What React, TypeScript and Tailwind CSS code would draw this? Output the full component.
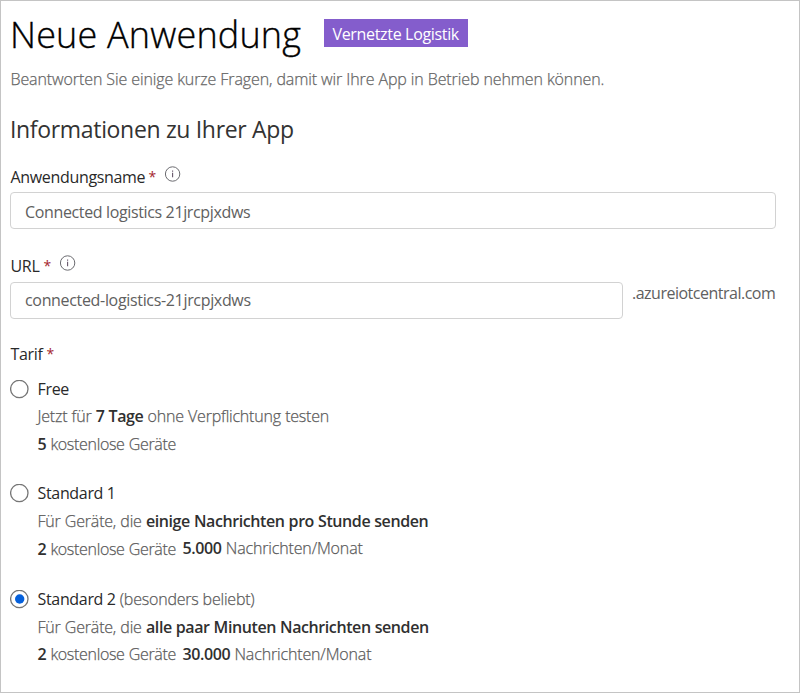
import type { ReactNode } from "react";

function Info() {
  return (
    <svg className="h-4 w-4 shrink-0" viewBox="0 0 16 16" fill="none">
      <circle cx="7.6" cy="8" r="7.2" stroke="#6b6b70" strokeWidth="1" />
      <path d="M7.6 6.7v4.6M7.6 4.6v1.1" stroke="#66566a" strokeWidth="1.1" />
    </svg>
  );
}

function Star() {
  return <span className="w-[7px] text-[14px] text-[#a4262c]">*</span>;
}

function Radio({ checked = false }: { checked?: boolean }) {
  return (
    <svg className="mr-[8.5px] h-[19px] w-[19px] shrink-0" viewBox="0 0 19 19">
      <circle cx="9.3" cy="9" r="8.7" fill="#fff" stroke="#767676" strokeWidth="1.3" />
      {checked && <circle cx="9.7" cy="9" r="4.7" fill="#0560db" />}
    </svg>
  );
}

function B({ children }: { children: ReactNode }) {
  return <b className="font-semibold tracking-[-0.41px] text-[#303030] [-webkit-text-stroke:0px]">{children}</b>;
}

function Detail({ children }: { children: ReactNode }) {
  return (
    <div className="flex pl-[27.5px] font-light leading-6 tracking-[-0.2px] text-[#5c5c5c] [word-spacing:0.3px] [-webkit-text-stroke:0.25px]">
      {children}
    </div>
  );
}

export default function App() {
  return (
    <main className="h-[693px] w-[800px] overflow-hidden whitespace-pre border border-[#c4c4c4] bg-white pl-[9px] font-['Open_Sans','Noto_Sans',sans-serif] text-[16px] tracking-[-0.33px] text-[#292929]">
      <header className="flex h-[66px] items-center">
        <h1 className="w-[314px] pt-[2px] text-[36px] font-light leading-[66px] tracking-[0.18px] text-black [-webkit-text-stroke:0.35px]">
          Neue Anwendung
        </h1>
        <span className="mb-[3px] h-[28px] w-[144px] bg-[#845dcc] pl-[8.5px] leading-[30px] tracking-[-0.33px] text-white">
          Vernetzte Logistik
        </span>
      </header>
      <p className="h-6 pl-[0.5px] font-light leading-6 tracking-[-0.1px] text-[#666] [-webkit-text-stroke:0.25px]">
        Beantworten Sie einige kurze Fragen, damit wir Ihre App in Betrieb nehmen können.
      </p>
      <h2 className="mt-[22px] h-8 text-[23px] leading-8 text-[#333]">
        Informationen zu Ihrer App
      </h2>

      <section className="mt-5">
        <div className="flex h-6 items-start leading-6">
          <label className="w-[138.5px] pl-[0.5px]">Anwendungsname</label>
          <Star />
          <span className="ml-[9px] pt-px"><Info /></span>
        </div>
        <div className="mt-[3px] h-[37px] w-[766px] rounded-sm border border-[#d2d2d2] pl-[14px] leading-[38px] tracking-[-0.36px] text-[#606060]">
          Connected logistics 21jrcpjxdws
        </div>
      </section>

      <section className="mt-[25px]">
        <div className="flex h-6 items-start leading-6">
          <label className="w-[33.5px] pl-[0.5px]">URL</label>
          <Star />
          <span className="ml-[9px] pt-px"><Info /></span>
        </div>
        <div className="mt-1 flex h-[37px]">
          <div className="h-[37px] w-[613px] rounded-sm border border-[#d2d2d2] pl-[14px] leading-[35px] text-[#606060]">
            connected-logistics-21jrcpjxdws
          </div>
          <span className="ml-[9px] leading-[23px] tracking-[-0.5px] text-[#606060]">.azureiotcentral.com</span>
        </div>
      </section>

      <section className="mt-[23px]">
        <div className="flex h-6 leading-6">
          <label className="w-[36.5px] pl-[0.5px]">Tarif</label>
          <Star />
        </div>

        <div className="mt-[11px]">
          <div className="flex h-6 items-center"><Radio /><span>Free</span></div>
          <div className="mt-[3px]"><Detail><span>Jetzt für <B>7 Tage</B> ohne Verpflichtung testen</span></Detail></div>
          <div className="mt-1"><Detail><span className="tracking-[-0.32px]"><B>5</B> kostenlose Geräte</span></Detail></div>
        </div>

        <div className="mt-[25px]">
          <div className="flex h-6 items-center"><Radio /><span>Standard 1</span></div>
          <div className="mt-1"><Detail><span>Für Geräte, die <B>einige Nachrichten pro Stunde senden</B></span></Detail></div>
          <div className="mt-1">
            <Detail>
              <span className="w-[145px] tracking-[-0.32px]"><B>2</B> kostenlose Geräte</span>
              <span className="-mt-px tracking-[-0.15px]"><B>5.000</B> Nachrichten/Monat</span>
            </Detail>
          </div>
        </div>

        <div className="mt-[26px]">
          <div className="flex h-6 items-center"><Radio checked /><span>Standard 2</span><span className="font-light tracking-[-0.2px] text-[#5c5c5c] [-webkit-text-stroke:0.25px]"> (besonders beliebt)</span></div>
          <div className="mt-1"><Detail><span>Für Geräte, die <B>alle paar Minuten Nachrichten senden</B></span></Detail></div>
          <div className="mt-[3px]">
            <Detail>
              <span className="w-[145px] tracking-[-0.32px]"><B>2</B> kostenlose Geräte</span>
              <span className="tracking-[-0.15px]"><B>30.000</B> Nachrichten/Monat</span>
            </Detail>
          </div>
        </div>
      </section>
    </main>
  );
}
